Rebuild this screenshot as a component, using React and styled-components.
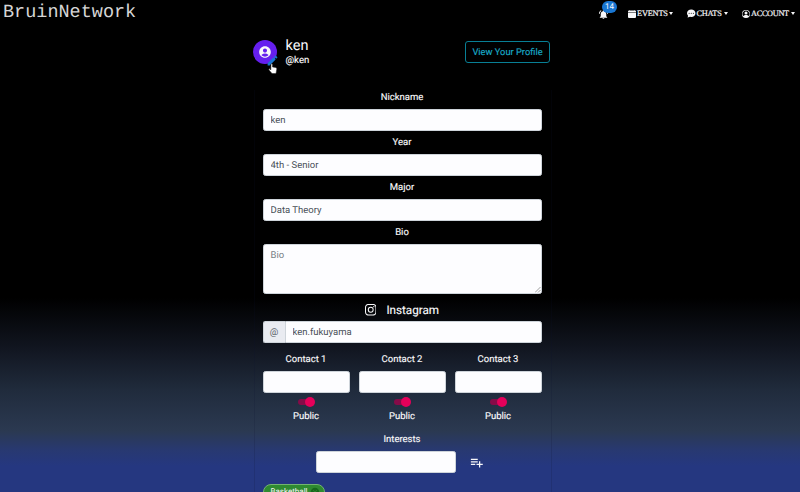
import React from "react";
import styled, { createGlobalStyle } from "styled-components";
import { MdPlaylistAdd, MdAccountCircle, MdNotificationsActive, MdEdit, MdCancel } from "react-icons/md";
import { BsInstagram, BsPersonCircle, BsChatDotsFill, BsCalendarFill } from "react-icons/bs";

const Global = createGlobalStyle`
  * { box-sizing: border-box; }
  html, body { margin: 0; height: 492px; overflow: hidden; background: #000; }
`;

const Page = styled.div`
  width: 800px;
  height: 492px;
  overflow: hidden;
  font-family: Roboto, sans-serif;
  font-size: 9.5px;
  text-rendering: geometricPrecision;
  color: #f8f8fa;
  background: linear-gradient(#000 0, #000 298px, #10141e 345px, #202b3c 390px, #2b3951 431px, #283971 450px, #253780 466px, #253780 100%);
`;

const NavBar = styled.header`
  display: flex;
  align-items: flex-start;
  justify-content: space-between;
  height: 27px;
  padding: 0 5px 0 3px;
`;

const Brand = styled.div`
  padding-top: 1px;
  font: 18.5px/24px "Courier New", "Liberation Mono", monospace;
  color: #d6d6d6;
`;

const NavItems = styled.nav`
  display: flex;
  height: 27px;
  align-items: center;
`;

const NavItem = styled.div`
  display: flex;
  align-items: center;
  width: ${(p) => p.$width}px;
  margin-left: ${(p) => p.$gap}px;
  font: 8.3px/12px "Liberation Serif", serif;
  letter-spacing: ${(p) => p.$spacing}px;
  white-space: nowrap;
  -webkit-text-stroke: 0.2px #f4f4f6;
  svg { flex: none; margin-right: 1px; }
`;

const Caret = styled.i`
  margin-left: auto;
  border: 2.5px solid transparent;
  border-width: 3px 2.5px 0;
  border-top-color: #f4f4f6;
`;

const Bell = styled.div`
  position: relative;
  display: flex;
  padding-top: 1px;
`;

const Count = styled.span`
  position: absolute;
  left: 4px;
  top: -7px;
  width: 15px;
  height: 12px;
  border-radius: 6px;
  background: #1976d2;
  font-size: 8px;
  line-height: 12px;
  text-align: center;
`;

const Profile = styled.section`
  display: flex;
  align-items: flex-start;
  width: 297px;
  height: 63px;
  margin-left: 253px;
  padding-top: 10px;
`;

const Avatar = styled.div`
  position: relative;
  display: flex;
  align-items: center;
  justify-content: center;
  width: 24px;
  height: 24px;
  margin-top: 3px;
  border-radius: 50%;
  background: #651fee;
`;

const EditMark = styled.div`
  position: absolute;
  left: 13px;
  top: 14px;
  display: flex;
  color: #1976d2;
`;

const Pointer = styled.svg`
  position: absolute;
  left: 15px;
  top: 23px;
`;

const Names = styled.div`
  flex: 1;
  margin-left: 8.5px;
`;

const DisplayName = styled.div`
  padding-top: 1px;
  font-size: 14.5px;
  line-height: 16px;
`;

const Handle = styled.div`
  font-size: 9.6px;
  line-height: 14px;
  -webkit-text-stroke: 0.15px currentColor;
`;

const ProfileButton = styled.button`
  width: 85px;
  height: 22px;
  margin-top: 4px;
  padding: 1px 0 0;
  border: 1px solid #087f95;
  border-radius: 3px;
  background: transparent;
  color: #18a9c6;
  font: 9.3px/19px Roboto, sans-serif;
  text-rendering: inherit;
  white-space: nowrap;
  -webkit-text-stroke: 0.15px currentColor;
`;

const Form = styled.main`
  width: 298px;
  height: 402px;
  margin-left: 253.5px;
  padding: 0 9px 0 8px;
  border: 1px solid rgba(10, 20, 50, 0.16);
  border-width: 0 1px;
`;

const Label = styled.div`
  height: ${(p) => p.$height || 23}px;
  padding-top: ${(p) => p.$top || 0}px;
  line-height: 16px;
  text-align: center;
  -webkit-text-stroke: 0.15px currentColor;
`;

const Field = styled.input`
  display: block;
  width: 100%;
  height: 22px;
  padding: 1px 7px 0;
  border: 1px solid #ced4da;
  border-radius: ${(p) => (p.$joined ? "0 2.5px 2.5px 0" : "2.5px")};
  background: #fdfdff;
  color: #495057;
  font: 9.5px Roboto, sans-serif;
  text-rendering: inherit;
  outline: 0;
`;

const BioField = styled.textarea`
  display: block;
  width: 100%;
  height: 50px;
  padding: 4px 7px;
  border: 1px solid #ced4da;
  border-radius: 2.5px;
  background: #fdfdff;
  color: #495057;
  font: 9.5px/14px Roboto, sans-serif;
  text-rendering: inherit;
  resize: none;
  &::placeholder { color: #777d84; }
`;

const BioBox = styled.div`
  position: relative;
`;

const Grip = styled.svg`
  position: absolute;
  right: 1px;
  bottom: 1px;
`;

const SocialLabel = styled.div`
  display: flex;
  align-items: center;
  justify-content: center;
  gap: 10px;
  height: 20px;
  margin: 6px 0 1px;
  font-size: 11.7px;
  -webkit-text-stroke: 0.15px currentColor;
`;

const InputGroup = styled.div`
  display: flex;
  height: 22px;
`;

const Prefix = styled.span`
  flex: none;
  width: 22px;
  border: 1px solid #ced4da;
  border-right: 0;
  border-radius: 2.5px 0 0 2.5px;
  background: #e9ebf1;
  color: #5a6068;
  line-height: 21px;
  text-align: center;
`;

const Contacts = styled.div`
  display: grid;
  grid-template-columns: repeat(3, 87px);
  gap: 9px;
  margin-top: 9px;
`;

const Toggle = styled.div`
  position: relative;
  width: 16px;
  height: 6px;
  margin: 6px auto 4px;
  border-radius: 3px;
  background: #850b48;
  &::after {
    content: "";
    position: absolute;
    right: -1px;
    top: -2px;
    width: 10px;
    height: 10px;
    border-radius: 50%;
    background: #e5005a;
  }
`;

const InterestRow = styled.div`
  display: flex;
  align-items: center;
  gap: 13px;
  margin: -4px 0 11px 53px;
`;

const InterestInput = styled.div`
  width: 140px;
`;

const Chip = styled.div`
  display: flex;
  align-items: center;
  justify-content: space-between;
  width: 62px;
  height: 16px;
  padding: 0 4px 0 7px;
  border: 1px solid #72b36f;
  border-radius: 9px;
  background: #2e8a30;
  font-size: 8px;
  line-height: 10px;
  svg { color: #17661c; }
`;

const fields = [["Nickname", "ken"], ["Year", "4th - Senior"], ["Major", "Data Theory"]];

export default function App() {
  return (
    <Page>
      <Global />
      <NavBar>
        <Brand>BruinNetwork</Brand>
        <NavItems>
          <Bell><MdNotificationsActive size={11} /><Count>14</Count></Bell>
          <NavItem $width={45} $gap={19} $spacing={-0.17}><BsCalendarFill size={8} />EVENTS<Caret /></NavItem>
          <NavItem $width={41} $gap={14} $spacing={-0.25}><BsChatDotsFill size={8.5} />CHATS<Caret /></NavItem>
          <NavItem $width={53} $gap={14} $spacing={-0.32}><BsPersonCircle size={8} />ACCOUNT<Caret /></NavItem>
        </NavItems>
      </NavBar>
      <Profile>
        <Avatar>
          <MdAccountCircle size={14} />
          <EditMark><MdEdit size={13} /></EditMark>
          <Pointer width="10" height="12" viewBox="0 0 10 12">
            <path d="M3 1c1-.5 1.5 0 1.5 1v2l3 .5c1 .2 1.5 1 1.2 2L8 10.5H4L1 7c-.5-1 .4-1.5 1-.8l.8.8z" fill="#fff" stroke="#222" strokeWidth=".5" />
          </Pointer>
        </Avatar>
        <Names><DisplayName>ken</DisplayName><Handle>@ken</Handle></Names>
        <ProfileButton>View Your Profile</ProfileButton>
      </Profile>
      <Form>
        {fields.map(([name, value], i) => (
          <div key={name}>
            <Label $height={i ? 23 : 19} $top={i ? 4 : 0}>{name}</Label>
            <Field aria-label={name} defaultValue={value} />
          </div>
        ))}
        <Label $top={4}>Bio</Label>
        <BioBox>
          <BioField placeholder="Bio" />
          <Grip width="6" height="6" viewBox="0 0 6 6"><path d="M0 5.5 5.5 0M3 5.5 5.5 3" stroke="#777" strokeWidth=".7" /></Grip>
        </BioBox>
        <SocialLabel><BsInstagram size={11.5} />Instagram</SocialLabel>
        <InputGroup>
          <Prefix>@</Prefix>
          <Field aria-label="Instagram" $joined defaultValue="ken.fukuyama" />
        </InputGroup>
        <Contacts>
          {[1, 2, 3].map((n) => (
            <div key={n}>
              <Label $height={19}>Contact {n}</Label>
              <Field aria-label={`Contact ${n}`} />
              <Toggle />
              <Label>Public</Label>
            </div>
          ))}
        </Contacts>
        <Label>Interests</Label>
        <InterestRow>
          <InterestInput><Field aria-label="Interests" /></InterestInput>
          <MdPlaylistAdd size={15} />
        </InterestRow>
        <Chip>Basketball<MdCancel size={10} /></Chip>
      </Form>
    </Page>
  );
}
